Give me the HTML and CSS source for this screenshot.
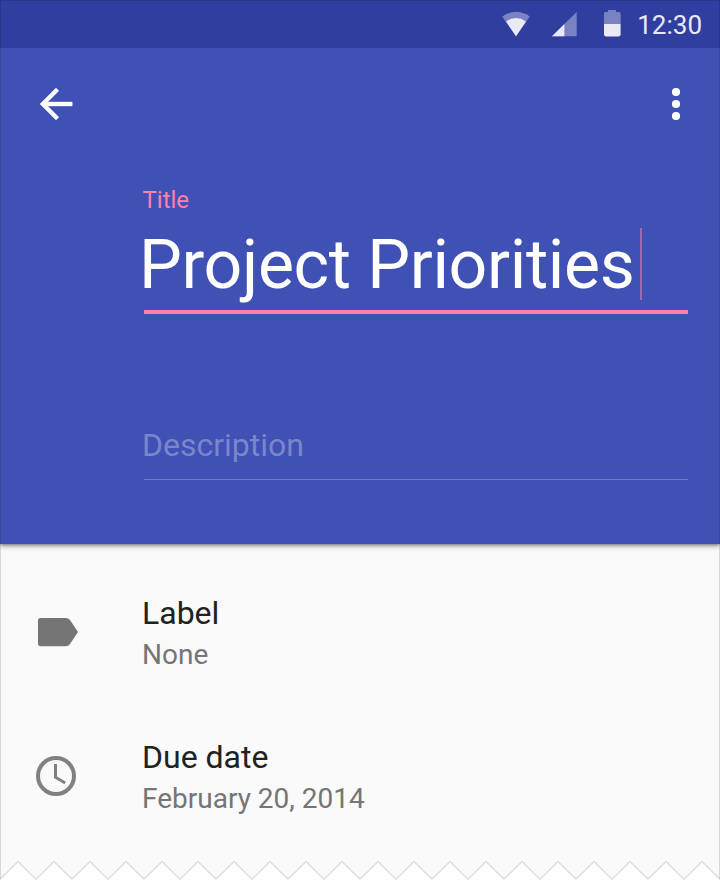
FILE: index.html
```html
<!DOCTYPE html>
<html lang="en">
<head>
<meta charset="utf-8">
<title>Project Priorities</title>
<link rel="stylesheet" href="styles.css">
</head>
<body>
<div class="screen">
  <header class="header">
    <div class="status">
      <svg class="status-icons" width="130" height="48" viewBox="500 0 130 48">
        <g fill="#e9eaf6">
          <path opacity=".4" d="M516 36.3 502.2 16.4Q516 7.2 529.8 16.4Z"/>
          <path d="M516 36.3 506 21.4Q516 14.6 526 21.4Z"/>
          <path opacity=".4" d="M552 36.2 576.7 12V36.2Z"/>
          <path d="M552 36.2 564.4 24V36.2Z"/>
          <path opacity=".4" d="M604 24V13.6Q604 12 605.6 12H608V10H616V12H619Q620.6 12 620.6 13.6V24Z"/>
          <path d="M604 24H620.6V34.6Q620.6 36.4 618.8 36.4H605.8Q604 36.4 604 34.6Z"/>
        </g>
      </svg>
      <span class="time">12:30</span>
    </div>
    <nav class="toolbar">
      <svg width="48" height="48" viewBox="0 0 24 24" fill="#fff" stroke="#fff" stroke-width=".2" stroke-linejoin="round"><path d="M20.1 11H7.83l5.59-5.59L12 4l-8 8 8 8 1.41-1.41L7.83 13H20.1v-2z"/></svg>
      <svg width="48" height="48" viewBox="0 0 24 24" fill="#fff"><circle cx="12" cy="6" r="2.05"/><circle cx="12" cy="12" r="2.05"/><circle cx="12" cy="18" r="2.05"/></svg>
    </nav>
    <div class="field field-title">
      <div class="field-label">Title</div>
      <div class="title-value"><span class="title-text">Project Priorities</span><span class="caret"></span></div>
    </div>
    <div class="field field-description">Description</div>
  </header>
  <main class="list">
    <div class="item">
      <svg class="item-icon" width="48" height="48" viewBox="0 0 48 48"><path fill="#757575" d="M8.6 10H33.8Q36.4 10 38 12L46 24 38 36Q36.4 38.2 33.8 38.2H8.6Q6 38.2 6 35.6V12.6Q6 10 8.6 10Z"/></svg>
      <div class="item-text"><div class="primary">Label</div><div class="secondary">None</div></div>
    </div>
    <div class="item">
      <svg class="item-icon" width="48" height="48" viewBox="0 0 48 48" fill="none" stroke="#808080"><circle cx="24" cy="24" r="18" stroke-width="4"/><path stroke-width="3" d="M23.5 12V25.2L33.2 31"/></svg>
      <div class="item-text"><div class="primary">Due date</div><div class="secondary">February 20, 2014</div></div>
    </div>
  </main>
  <svg class="torn" width="720" height="20" viewBox="0 860 720 20">
    <defs><pattern id="teeth" x="0" y="860" width="36" height="20" patternUnits="userSpaceOnUse">
      <path fill="#fff" d="M0 20V19L18 1.5 36 19V20Z"/>
      <path fill="none" stroke="#dcdcdc" stroke-width="1.4" d="M-1 18.5 0 19.2 18 1.5 36 19.2 37 18.5"/>
    </pattern></defs>
    <rect y="860" width="720" height="20" fill="url(#teeth)"/>
  </svg>
  <div class="frame"></div>
</div>
</body>
</html>
```
FILE: styles.css
```css
* { box-sizing: border-box; }
body { margin: 0; font-family: Roboto, "Liberation Sans", sans-serif; }
svg { display: block; flex: none; }
.screen {
  position: relative;
  display: flex;
  flex-direction: column;
  width: 720px;
  height: 880px;
  overflow: hidden;
  background: #fafafa;
}
.header {
  flex: none;
  height: 544px;
  background: #3f51b5;
  box-shadow: 0 2px 5px rgba(0, 0, 0, .4), 0 1px 2px rgba(0, 0, 0, .2);
}
.status {
  display: flex;
  justify-content: flex-end;
  height: 48px;
  padding-right: 18px;
  background: #303f9f;
}
.time {
  width: 72px;
  text-align: right;
  font-size: 26px;
  line-height: 50px;
  white-space: nowrap;
  color: #e9eaf6;
}
.toolbar {
  display: flex;
  justify-content: space-between;
  padding: 32px 20px 0 32px;
}
.field { margin: 0 32px 0 144px; }
.field-title {
  height: 128px;
  margin-top: 58px;
  border-bottom: 4px solid #ff80ab;
}
.field-label {
  margin-left: -1.5px;
  font-size: 24px;
  line-height: 28px;
  color: #ff80ab;
}
.title-value {
  display: flex;
  margin: 11px 0 0 -5px;
  font-size: 68px;
  line-height: 80px;
  letter-spacing: -0.36px;
  white-space: nowrap;
  color: #fff;
}
.title-text { width: 501px; }
.caret {
  width: 2px;
  height: 72px;
  margin-top: 3px;
  background: #9f69b0;
}
.field-description {
  height: 54px;
  margin-top: 112px;
  text-indent: -2px;
  font-size: 32px;
  line-height: 38px;
  color: #7986cb;
  border-bottom: 1px solid #6f7dc8;
}
.list { padding-top: 50px; }
.item {
  display: flex;
  height: 144px;
  padding-left: 32px;
}
.item-icon { margin-top: 14px; }
.item-text { margin-left: 62px; }
.primary {
  font-size: 32px;
  line-height: 38px;
  color: #212121;
}
.secondary {
  margin-top: 6px;
  font-size: 28px;
  line-height: 34px;
  color: #757575;
}
.torn {
  position: absolute;
  bottom: 0;
  left: 0;
}
.frame {
  position: absolute;
  inset: 0 0 1px;
  border: 1px solid rgba(0, 0, 0, .13);
  border-bottom: 0;
}
```
